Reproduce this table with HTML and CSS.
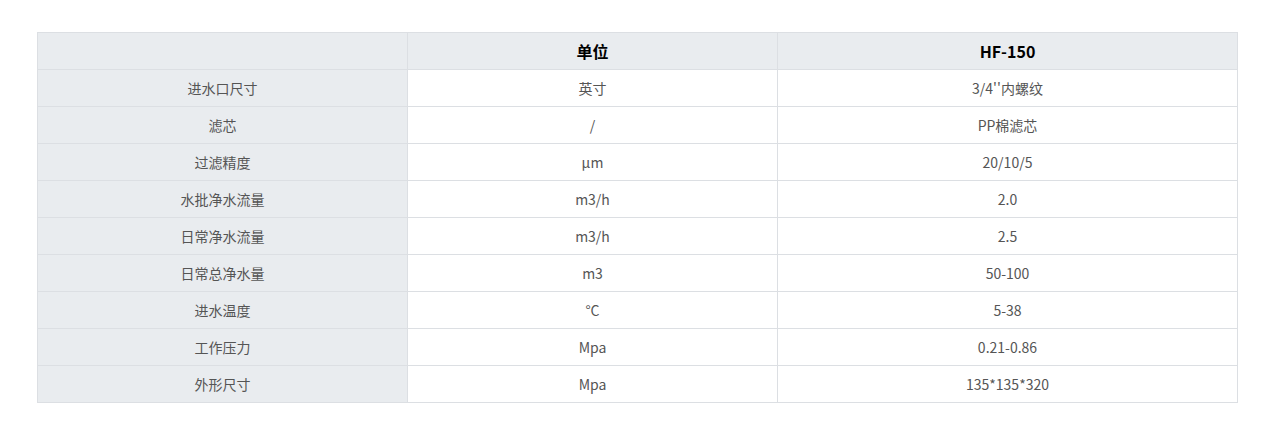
FILE: index.html
```html
<!DOCTYPE html>
<html lang="zh">
<head>
<meta charset="utf-8">
<link rel="stylesheet" href="styles.css">
</head>
<body>
<div class="wrap">
<table class="spec">
<colgroup><col class="c1"><col class="c2"><col class="c3"></colgroup>
<thead>
<tr><th class="lab"></th><th>单位</th><th>HF-150</th></tr>
</thead>
<tbody>
<tr><td class="lab">进水口尺寸</td><td>英寸</td><td>3/4''内螺纹</td></tr>
<tr><td class="lab">滤芯</td><td>/</td><td>PP棉滤芯</td></tr>
<tr><td class="lab">过滤精度</td><td>μm</td><td>20/10/5</td></tr>
<tr><td class="lab">水批净水流量</td><td>m3/h</td><td>2.0</td></tr>
<tr><td class="lab">日常净水流量</td><td>m3/h</td><td>2.5</td></tr>
<tr><td class="lab">日常总净水量</td><td>m3</td><td>50-100</td></tr>
<tr><td class="lab">进水温度</td><td>°C</td><td>5-38</td></tr>
<tr><td class="lab">工作压力</td><td>Mpa</td><td>0.21-0.86</td></tr>
<tr><td class="lab">外形尺寸</td><td>Mpa</td><td>135*135*320</td></tr>
</tbody>
</table>
</div>
</body>
</html>
```
FILE: styles.css
```css
html, body { margin: 0; padding: 0; background: #fff; }
.wrap { padding: 32px 0 0 37px; }
.spec {
  border-collapse: collapse;
  table-layout: fixed;
  width: 1200px;
  font-family: "Noto Sans CJK SC", "Noto Sans", sans-serif;
  font-size: 14px;
  color: #555;
}
.c1 { width: 370px; }
.c2 { width: 370px; }
.c3 { width: 460px; }
.spec th, .spec td {
  border: 1px solid #dcdfe3;
  height: 37px;
  padding: 0;
  text-align: center;
  vertical-align: middle;
  box-sizing: border-box;
}
.spec th {
  background: #e9ecef;
  color: #000;
  font-weight: bold;
  font-size: 16px;
}
.spec td.lab { background: #e9ecef; }
```
